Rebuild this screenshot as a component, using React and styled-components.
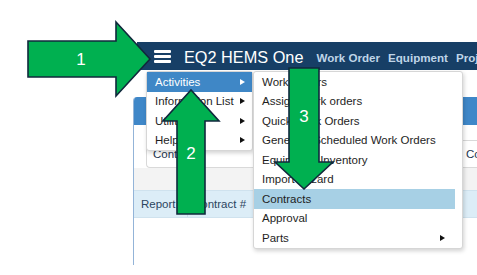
import styled, { createGlobalStyle } from 'styled-components';

const GlobalStyle = createGlobalStyle`
  html, body {
    margin: 0;
    padding: 0;
    background: #fff;
  }
  body {
    font-family: "Liberation Sans", Arial, sans-serif;
  }
`;

const Page = styled.div`
  position: relative;
  width: 477px;
  height: 275px;
  overflow: hidden;
  background: #fff;
  padding-top: 42px;
  box-sizing: border-box;
`;

const Header = styled.div`
  position: relative;
  margin-left: 137px;
  height: 28px;
  background: #173f66;
  display: flex;
  align-items: center;
  padding-left: 17px;
  white-space: nowrap;
`;

const Burger = styled.svg`
  flex: none;
  margin-top: 1px;
`;

const Brand = styled.span`
  margin-left: 13px;
  color: #fff;
  font-size: 16.3px;
  padding-top: 2px;
`;

const Nav = styled.nav`
  display: flex;
  gap: 8px;
  margin-left: 13px;
  padding-top: 3px;
`;

const NavLink = styled.span`
  color: #bfd5e8;
  font-size: 11.6px;
  font-weight: bold;
`;

const Menu = styled.ul`
  position: absolute;
  top: ${(p) => p.$top};
  left: ${(p) => p.$left};
  width: ${(p) => p.$width};
  margin: 0;
  padding: 0 ${(p) => p.$padRight || '0'} 0 0;
  list-style: none;
  background: #fff;
  border: 1px solid #d6d6d6;
  border-radius: 3px;
  box-shadow: 1px 2px 4px rgba(0, 0, 0, 0.18);
  box-sizing: border-box;
  z-index: 2;
`;

const Item = styled.li`
  position: relative;
  height: 19.5px;
  display: flex;
  align-items: center;
  padding: 0 7px 0 8px;
  font-size: 11.5px;
  color: ${(p) => (p.$active ? '#fff' : '#1e1e1e')};
  background: ${(p) => (p.$active ? '#3f87c6' : p.$hover ? '#a7d0e5' : 'transparent')};
`;

const Caret = styled.span`
  margin-left: auto;
  width: 0;
  height: 0;
  border-top: 3.5px solid transparent;
  border-bottom: 3.5px solid transparent;
  border-left: 5px solid ${(p) => (p.$light ? '#fff' : '#111')};
  margin-right: ${(p) => p.$inset || '0'};
`;

const Panel = styled.section`
  margin: 27px 0 0 133px;
  height: 168px;
  border-left: 1px solid #93b4d8;
  border-top-left-radius: 4px;
  overflow: hidden;
  display: flex;
  flex-direction: column;
`;

const PanelTitle = styled.div`
  height: 28px;
  flex: none;
  background: #3f87c8;
`;

const PanelBody = styled.div`
  padding: 15px 0 0 12px;
  background: #fff;
`;

const Card = styled.div`
  height: 28px;
  box-sizing: border-box;
  border: 1px solid #d9d9d9;
  border-right: none;
  border-radius: 0 0 0 4px;
  display: grid;
  grid-template-columns: 313px auto;
  align-items: center;
  padding-left: 6px;
  font-size: 11.5px;
  color: #1d3550;
  white-space: nowrap;
`;

const Toolbar = styled.div`
  height: 22px;
  background: #f3f3f3;
`;

const TableHead = styled.div`
  height: 28px;
  flex: none;
  display: flex;
  background: #dcedf7;
  border-top: 1px solid #cfe2ee;
  border-bottom: 1px solid #cfe2ee;
  box-sizing: border-box;
`;

const HeadCell = styled.div`
  width: ${(p) => p.$width};
  display: flex;
  align-items: center;
  padding-left: ${(p) => p.$pad};
  box-sizing: border-box;
  border-right: 1px solid #c8dce9;
  font-size: 11.5px;
  color: #2c4560;
  white-space: nowrap;
`;

const Callouts = styled.svg`
  position: absolute;
  left: 0;
  top: 0;
  z-index: 5;
  pointer-events: none;
`;

const activities = [
  'Work Orders',
  'Assign Work orders',
  'Quick Work Orders',
  'Generate Scheduled Work Orders',
  'Equipment Inventory',
  'Import Wizard',
  'Contracts',
  'Approval',
  'Parts',
];

const arrows = [
  { label: '1', points: '28,41 116,41 116,22 150,59 116,96 116,77 28,77', x: 81, y: 59 },
  { label: '2', points: '177,214 177,121 163,121 191,90 219,121 205,121 205,214', x: 191, y: 153 },
  { label: '3', points: '289,68 319,68 319,162 333,162 304,189 275,162 289,162', x: 304, y: 116 },
];

export default function App() {
  return (
    <>
      <GlobalStyle />
      <Page>
        <Header>
          <Burger width="17" height="13" viewBox="0 0 17 13">
            <rect x="0" y="0" width="17" height="3" rx="1" fill="#fff" />
            <rect x="0" y="5" width="17" height="3" rx="1" fill="#fff" />
            <rect x="0" y="10" width="17" height="3" rx="1" fill="#fff" />
          </Burger>
          <Brand>EQ2 HEMS One</Brand>
          <Nav>
            <NavLink>Work Order</NavLink>
            <NavLink>Equipment</NavLink>
            <NavLink>Projects</NavLink>
          </Nav>

          <Menu $top="29px" $left="9px" $width="107px">
            <Item $active>
              Activities
              <Caret $light />
              <Menu $top="-1px" $left="calc(100% + 1px)" $width="210px" $padRight="7px">
                {activities.map((name) => (
                  <Item key={name} $hover={name === 'Contracts'}>
                    {name}
                    {name === 'Parts' && <Caret $inset="3px" />}
                  </Item>
                ))}
              </Menu>
            </Item>
            <Item>
              Information List
              <Caret />
            </Item>
            <Item>
              Utilities
              <Caret />
            </Item>
            <Item>
              Help
              <Caret />
            </Item>
          </Menu>
        </Header>

        <Panel>
          <PanelTitle />
          <PanelBody>
            <Card>
              <span>Contracts</span>
              <span>Contract Details</span>
            </Card>
          </PanelBody>
          <Toolbar />
          <TableHead>
            <HeadCell $width="54px" $pad="7px">Report</HeadCell>
            <HeadCell $width="66px" $pad="5px">Contract #</HeadCell>
            <HeadCell $width="120px" $pad="6px">Description</HeadCell>
          </TableHead>
        </Panel>

        <Callouts width="477" height="275" viewBox="0 0 477 275">
          {arrows.map((a) => (
            <g key={a.label}>
              <polygon
                points={a.points}
                fill="#00b050"
                stroke="#10283c"
                strokeWidth="1.6"
                strokeLinejoin="miter"
              />
              <text
                x={a.x}
                y={a.y}
                fill="#fff"
                fontSize="17"
                fontFamily="Liberation Sans, Arial, sans-serif"
                textAnchor="middle"
                dominantBaseline="central"
              >
                {a.label}
              </text>
            </g>
          ))}
        </Callouts>
      </Page>
    </>
  );
}
